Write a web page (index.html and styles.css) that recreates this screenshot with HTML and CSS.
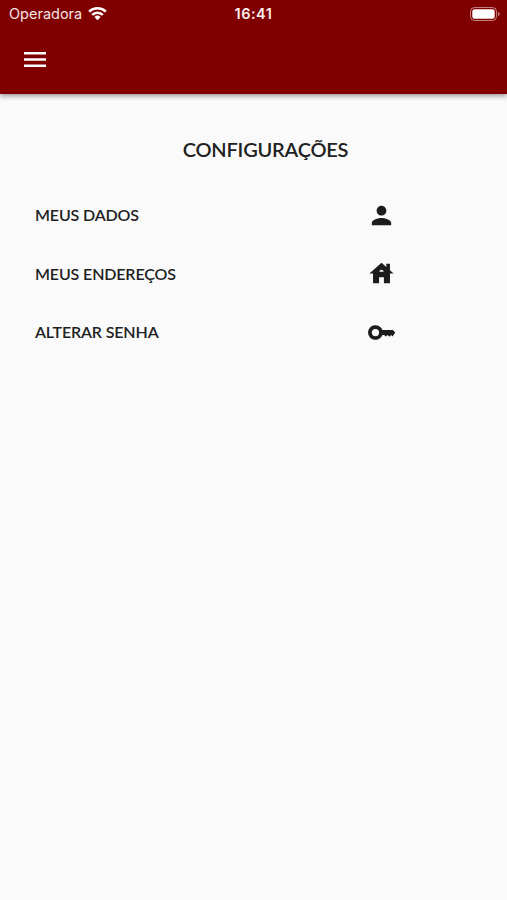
FILE: index.html
```html
<!DOCTYPE html>
<html lang="pt-BR">
<head>
<meta charset="utf-8">
<title>Configurações</title>
<link rel="stylesheet" href="styles.css">
</head>
<body>
<header class="header">
  <div class="status">
    <div class="carrier"><span>Operadora</span>
      <svg class="wifi" viewBox="0 0 20 15"><g fill="none" stroke="currentColor" stroke-width="2.7"><path d="M1.2 5.5a12.6 12.6 0 0 1 17.6 0"/><path d="M4.4 9a8 8 0 0 1 11.2 0"/></g><path fill="currentColor" d="M6.8 11.2a4.6 4.6 0 0 1 6.4 0L10 14.5z"/></svg>
    </div>
    <time class="clock">16:41</time>
    <svg class="battery" viewBox="0 0 30 14"><rect x=".5" y=".5" width="26" height="13" rx="4" fill="none" stroke="currentColor" opacity=".5"/><rect x="2.3" y="2.3" width="22.4" height="9.4" rx="2.3" fill="currentColor"/><path d="M28 4.7q1.8 .8 1.8 2.3t-1.8 2.3z" fill="currentColor" opacity=".5"/></svg>
  </div>
  <div class="toolbar">
    <svg class="menu" viewBox="3 6 18 12" preserveAspectRatio="none"><path fill="currentColor" d="M3 18h18v-2H3v2zm0-5h18v-2H3v2zm0-7v2h18V6H3z"/></svg>
  </div>
</header>
<main class="content">
  <h1 class="title">CONFIGURAÇÕES</h1>
  <ul class="list">
    <li class="item"><span>MEUS DADOS</span><svg class="icon" viewBox="0 0 24 24"><path d="M12 12c2.21 0 4-1.79 4-4s-1.79-4-4-4-4 1.79-4 4 1.79 4 4 4zm0 2c-2.67 0-8 1.34-8 4v2h16v-2c0-2.66-5.33-4-8-4z"/></svg></li>
    <li class="item"><span>MEUS ENDEREÇOS</span><svg class="icon" viewBox="0 0 24 24"><path fill-rule="evenodd" d="M19 9.3V4h-3v2.6L12 3 2 12h3v8h5v-5h4v5h5v-8h3l-3-2.7zM10.2 10.6c0-1 .8-1.8 1.8-1.8s1.8.8 1.8 1.8h-3.6z"/></svg></li>
    <li class="item"><span>ALTERAR SENHA</span><svg class="icon" viewBox="0 0 24 24"><path fill-rule="evenodd" d="M12.75 10A6.1 6.1 0 1 0 12.75 14H14.2l1.3 1.3 1.5-1.3 1.5 1.5 1.4-1.5 1.3 1.3L23.4 12l-2-2zM7 15a3 3 0 1 1 0-6 3 3 0 0 1 0 6z"/></svg></li>
  </ul>
</main>
</body>
</html>
```
FILE: styles.css
```css
* { box-sizing: border-box; }
body { margin: 0; min-height: 900px; background: #fafafa; color: #212121; font-family: Lato, sans-serif; }
.header { height: 94px; background: #800000; color: #fff; box-shadow: 0 2px 5px rgba(0,0,0,.4); }
.status { height: 27px; padding: 0 7px 0 9px; display: grid; grid-template-columns: 1fr auto 1fr; align-items: center; font-family: Inter, sans-serif; }
.carrier { display: flex; align-items: center; gap: 6px; font-size: 14.5px; color: #f3e4e4; }
.wifi { width: 19px; height: 15px; color: #fff; }
.clock { font-size: 14.5px; font-weight: 600; letter-spacing: .5px; margin-right: 2px; color: #fbeeee; }
.battery { width: 30px; height: 14px; justify-self: end; }
.toolbar { height: 65px; padding-left: 24px; display: flex; align-items: center; }
.menu { width: 22px; height: 15px; }
.content { padding: 43px 35px 0; }
.title { margin: 0 0 0 24px; font-size: 20px; line-height: 24px; font-weight: 600; letter-spacing: -.22px; text-align: center; }
.list { list-style: none; margin: 24.4px 0 0; padding: 0; }
.item { height: 58.5px; display: grid; grid-template-columns: 332px 30px; align-items: center; font-size: 16px; font-weight: 600; letter-spacing: -.14px; }
.icon { width: 29px; height: 29px; margin-top: 1px; fill: #1c1c1c; }
```
